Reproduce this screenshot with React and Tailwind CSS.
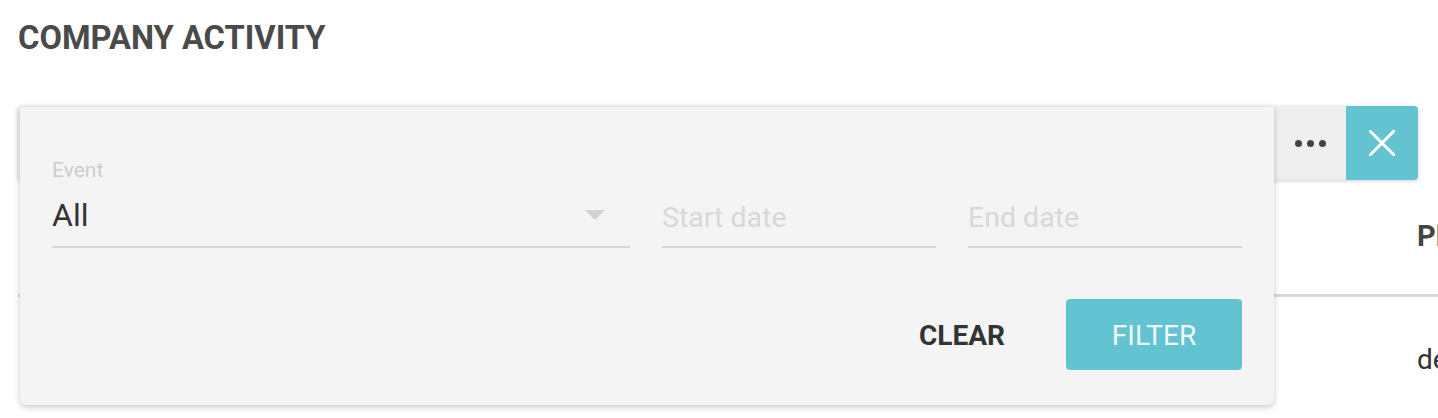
import React from "react";

function Field({ label, children, className }) {
  return (
    <div className={className}>
      {label && <div className="text-[21px] leading-[24px] text-[#cdcdcd]">{label}</div>}
      {children}
    </div>
  );
}

export default function App() {
  return (
    <div className="relative h-[418px] overflow-hidden bg-white font-['Roboto',sans-serif]">
      <div className="pl-[18px] pt-[19px]">
        <h1 className="text-[32.7px] leading-[38px] font-bold text-[#4a4a4a]">COMPANY ACTIVITY</h1>

        <div className="mt-[49px] mr-[20px] flex h-[74px] rounded-[4px] bg-[#efefef] shadow-[0_1px_4px_rgba(0,0,0,0.18)]">
          <div className="flex-1" />
          <button className="flex w-[72px] items-center justify-center gap-[5px]">
            <span className="h-[7px] w-[7px] rounded-full bg-[#444]" />
            <span className="h-[7px] w-[7px] rounded-full bg-[#444]" />
            <span className="h-[7px] w-[7px] rounded-full bg-[#444]" />
          </button>
          <button className="flex w-[72px] items-center justify-center rounded-r-[4px] bg-[#63c3d1]">
            <svg width="26" height="26" viewBox="0 0 26 26">
              <line x1="1" y1="1" x2="25" y2="25" stroke="white" strokeWidth="3" strokeLinecap="round" />
              <line x1="25" y1="1" x2="1" y2="25" stroke="white" strokeWidth="3" strokeLinecap="round" />
            </svg>
          </button>
        </div>

        <div className="w-[1700px]">
          <div className="flex h-[117px] items-center border-b-[3px] border-[#d9d9d9] text-[29px] font-bold text-[#444]">
            <div className="w-[400px] pl-[40px]">Date</div>
            <div className="w-[500px]">User</div>
            <div className="w-[499px]">Event</div>
            <div className="w-[300px]">Platform</div>
          </div>
          <div className="flex h-[126px] items-center text-[28px] text-[#333]">
            <div className="w-[400px] pl-[40px]">2019-03-12</div>
            <div className="w-[500px]">admin</div>
            <div className="w-[499px]">Login</div>
            <div className="w-[300px]">desktop</div>
          </div>
        </div>
      </div>

      <div className="absolute left-[20px] top-[107px] w-[1254px] rounded-b-[6px] bg-[#f4f4f4] px-[32px] pt-[51px] pb-[35px] shadow-[0_2px_6px_rgba(0,0,0,0.22)]">
        <div className="flex items-end gap-[32px]">
          <Field label="Event" className="w-[578px]">
            <div className="mt-[14px] flex items-center justify-between border-b-2 border-[#d8d8d8] pb-[12px]">
              <span className="text-[32px] leading-[38px] text-[#333]">All</span>
              <svg width="20" height="10" viewBox="0 0 20 10" className="mr-[25px]">
                <polygon points="0,0 20,0 10,10" fill="#d3d3d3" />
              </svg>
            </div>
          </Field>
          <Field className="w-[274px]">
            <div className="border-b-2 border-[#d8d8d8] pb-[6px] text-[28.5px] leading-[44px] text-[#d8d8d8]">Start date</div>
          </Field>
          <Field className="w-[274px]">
            <div className="border-b-2 border-[#d8d8d8] pb-[6px] text-[28.5px] leading-[44px] text-[#d8d8d8]">End date</div>
          </Field>
        </div>

        <div className="mt-[51px] flex justify-end gap-[16px]">
          <button className="h-[71px] w-[176px] pt-[3px] text-[28px] font-bold text-[#333]">CLEAR</button>
          <button className="h-[71px] w-[176px] rounded-[4px] bg-[#63c3d1] pt-[3px] text-[28px] text-[#eef9fb]">FILTER</button>
        </div>
      </div>
    </div>
  );
}
